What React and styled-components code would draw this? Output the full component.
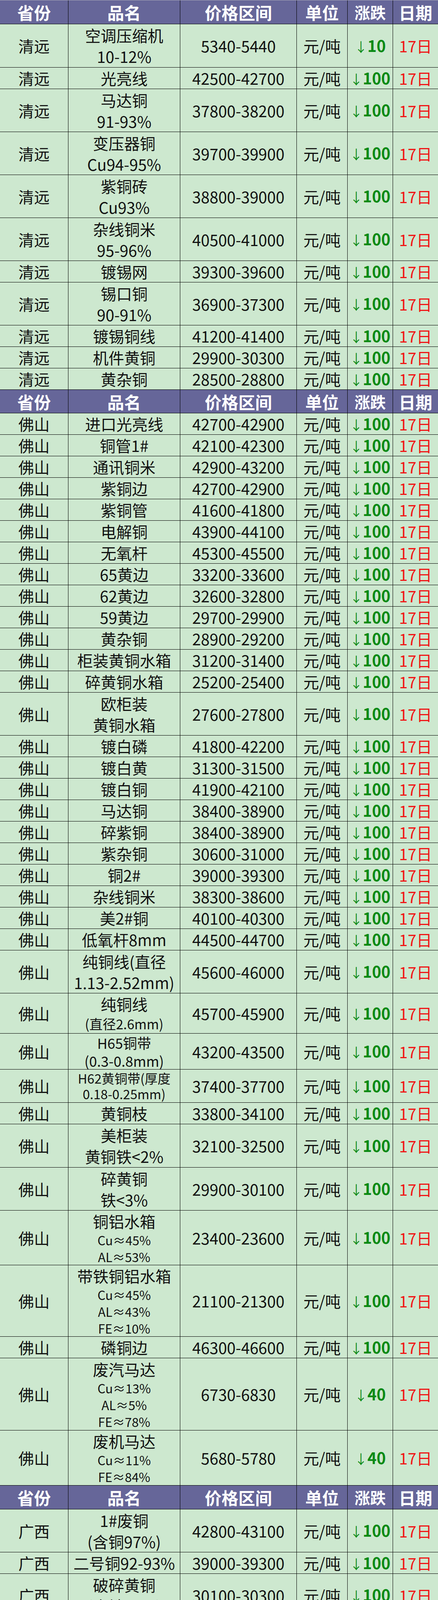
import React from 'react';
import styled, { createGlobalStyle } from 'styled-components';

const Global = createGlobalStyle`
  html, body { margin: 0; padding: 0; background: #ffffff; }
  body { font-family: "Noto Sans CJK SC", "Noto Sans", sans-serif; }
`;

const COLS = '175px 286px 298px 130px 116px 115px';
const GREEN_BG = '#cde8cf';

const LINE = {
  m: { f: 40, lh: 54 },
  s: { f: 32, lh: 43 },
  h: { f: 36, lh: 46 },
  t: { f: 33, lh: 40 },
  p: { f: 34, lh: 48 },
};

const Sheet = styled.div`
  width: 1120px;
  border-top: 1px solid #a8a8b8;
  background: ${GREEN_BG};
`;

const Row = styled.div`
  display: grid;
  grid-template-columns: ${COLS};
  grid-template-rows: 100%;
  height: ${(p) => p.$h}px;
  box-sizing: border-box;
  border-bottom: 1px solid #000;
  background: ${(p) => (p.$head ? '#666699' : GREEN_BG)};
`;

const Cell = styled.div`
  display: flex;
  flex-direction: column;
  align-items: center;
  justify-content: center;
  box-sizing: border-box;
  border-right: 1px solid #000;
  min-width: 0;
  min-height: 0;
  white-space: nowrap;
  font-size: 40px;
  line-height: 54px;
  color: #111;
  &:last-child { border-right: none; }
`;

const HeadCell = styled(Cell)`
  color: #ffffff;
  font-weight: 700;
  font-size: ${(p) => (p.$narrow ? 40 : 43)}px;
`;

const Line = styled.span`
  display: block;
  font-size: ${(p) => LINE[p.$v].f}px;
  line-height: ${(p) => LINE[p.$v].lh}px;
`;

const ChangeCell = styled(Cell)`
  color: #0a8a14;
  font-weight: 700;
`;

const ChangeText = styled.span`
  display: block;
  line-height: 54px;
`;

const Arrow = styled.span`
  font-weight: 400;
  font-size: 33px;
`;

const DateCell = styled(Cell)`
  color: #f01515;
`;

const HEADERS = ['省份', '品名', '价格区间', '单位', '涨跌', '日期'];

const L = (t, v = 'm') => ({ t, v });

const sections = [
  {
    prov: '清远',
    headH: 61,
    rows: [
      { n: [L('空调压缩机'), L('10-12%')], p: '5340-5440', c: 10, h: 111 },
      { n: [L('光亮线')], p: '42500-42700', c: 100, h: 55 },
      { n: [L('马达铜'), L('91-93%')], p: '37800-38200', c: 100, h: 110 },
      { n: [L('变压器铜'), L('Cu94-95%')], p: '39700-39900', c: 100, h: 110 },
      { n: [L('紫铜砖'), L('Cu93%')], p: '38800-39000', c: 100, h: 110 },
      { n: [L('杂线铜米'), L('95-96%')], p: '40500-41000', c: 100, h: 110 },
      { n: [L('镀锡网')], p: '39300-39600', c: 100, h: 55 },
      { n: [L('锡口铜'), L('90-91%')], p: '36900-37300', c: 100, h: 110 },
      { n: [L('镀锡铜线')], p: '41200-41400', c: 100, h: 55 },
      { n: [L('机件黄铜')], p: '29900-30300', c: 100, h: 55 },
      { n: [L('黄杂铜')], p: '28500-28800', c: 100, h: 55 },
    ],
  },
  {
    prov: '佛山',
    headH: 60,
    rows: [
      { n: [L('进口光亮线')], p: '42700-42900', c: 100, h: 55 },
      { n: [L('铜管1#')], p: '42100-42300', c: 100, h: 55 },
      { n: [L('通讯铜米')], p: '42900-43200', c: 100, h: 55 },
      { n: [L('紫铜边')], p: '42700-42900', c: 100, h: 55 },
      { n: [L('紫铜管')], p: '41600-41800', c: 100, h: 55 },
      { n: [L('电解铜')], p: '43900-44100', c: 100, h: 55 },
      { n: [L('无氧杆')], p: '45300-45500', c: 100, h: 55 },
      { n: [L('65黄边')], p: '33200-33600', c: 100, h: 55 },
      { n: [L('62黄边')], p: '32600-32800', c: 100, h: 55 },
      { n: [L('59黄边')], p: '29700-29900', c: 100, h: 55 },
      { n: [L('黄杂铜')], p: '28900-29200', c: 100, h: 55 },
      { n: [L('柜装黄铜水箱')], p: '31200-31400', c: 100, h: 55 },
      { n: [L('碎黄铜水箱')], p: '25200-25400', c: 100, h: 55 },
      { n: [L('欧柜装'), L('黄铜水箱')], p: '27600-27800', c: 100, h: 110 },
      { n: [L('镀白磷')], p: '41800-42200', c: 100, h: 55 },
      { n: [L('镀白黄')], p: '31300-31500', c: 100, h: 55 },
      { n: [L('镀白铜')], p: '41900-42100', c: 100, h: 55 },
      { n: [L('马达铜')], p: '38400-38900', c: 100, h: 55 },
      { n: [L('碎紫铜')], p: '38400-38900', c: 100, h: 55 },
      { n: [L('紫杂铜')], p: '30600-31000', c: 100, h: 55 },
      { n: [L('铜2#')], p: '39000-39300', c: 100, h: 55 },
      { n: [L('杂线铜米')], p: '38300-38600', c: 100, h: 55 },
      { n: [L('美2#铜')], p: '40100-40300', c: 100, h: 55 },
      { n: [L('低氧杆8mm')], p: '44500-44700', c: 100, h: 55 },
      { n: [L('纯铜线(直径'), L('1.13-2.52mm)')], p: '45600-46000', c: 100, h: 110 },
      { n: [L('纯铜线'), L('(直径2.6mm)', 'p')], p: '45700-45900', c: 100, h: 103 },
      { n: [L('H65铜带', 'h'), L('(0.3-0.8mm)', 'h')], p: '43200-43500', c: 100, h: 92 },
      { n: [L('H62黄铜带(厚度', 't'), L('0.18-0.25mm)', 't')], p: '37400-37700', c: 100, h: 85 },
      { n: [L('黄铜枝')], p: '33800-34100', c: 100, h: 55 },
      { n: [L('美柜装'), L('黄铜铁<2%')], p: '32100-32500', c: 100, h: 111 },
      { n: [L('碎黄铜'), L('铁<3%')], p: '29900-30100', c: 100, h: 110 },
      { n: [L('铜铝水箱'), L('Cu≈45%', 's'), L('AL≈53%', 's')], p: '23400-23600', c: 100, h: 140 },
      { n: [L('带铁铜铝水箱'), L('Cu≈45%', 's'), L('AL≈43%', 's'), L('FE≈10%', 's')], p: '21100-21300', c: 100, h: 183 },
      { n: [L('磷铜边')], p: '46300-46600', c: 100, h: 55 },
      { n: [L('废汽马达'), L('Cu≈13%', 's'), L('AL≈5%', 's'), L('FE≈78%', 's')], p: '6730-6830', c: 40, h: 185 },
      { n: [L('废机马达'), L('Cu≈11%', 's'), L('FE≈84%', 's')], p: '5680-5780', c: 40, h: 141 },
    ],
  },
  {
    prov: '广西',
    headH: 61,
    rows: [
      { n: [L('1#废铜'), L('(含铜97%)')], p: '42800-43100', c: 100, h: 110 },
      { n: [L('二号铜92-93%')], p: '39000-39300', c: 100, h: 55 },
      { n: [L('破碎黄铜'), L('(含铁<4%)')], p: '30100-30300', c: 100, h: 110 },
      { n: [L('黄杂铜(进口)')], p: '22800-23000', c: 100, h: 55 },
      { n: [L('1#光亮铜线')], p: '42800-43000', c: 100, h: 55 },
    ],
  },
];

function HeaderRow({ h }) {
  return (
    <Row $head $h={h}>
      {HEADERS.map((t) => (
        <HeadCell key={t} $narrow={t === '涨跌'}>
          {t}
        </HeadCell>
      ))}
    </Row>
  );
}

function DataRow({ prov, row }) {
  return (
    <Row $h={row.h}>
      <Cell>{prov}</Cell>
      <Cell>
        {row.n.map((l, i) => (
          <Line key={i} $v={l.v}>
            {l.t}
          </Line>
        ))}
      </Cell>
      <Cell>{row.p}</Cell>
      <Cell>元/吨</Cell>
      <ChangeCell>
        <ChangeText>
          <Arrow>↓</Arrow>
          {row.c}
        </ChangeText>
      </ChangeCell>
      <DateCell>17日</DateCell>
    </Row>
  );
}

export default function App() {
  return (
    <>
      <Global />
      <Sheet>
        {sections.map((s) => (
          <React.Fragment key={s.prov}>
            <HeaderRow h={s.headH} />
            {s.rows.map((r, i) => (
              <DataRow key={i} prov={s.prov} row={r} />
            ))}
          </React.Fragment>
        ))}
      </Sheet>
    </>
  );
}
